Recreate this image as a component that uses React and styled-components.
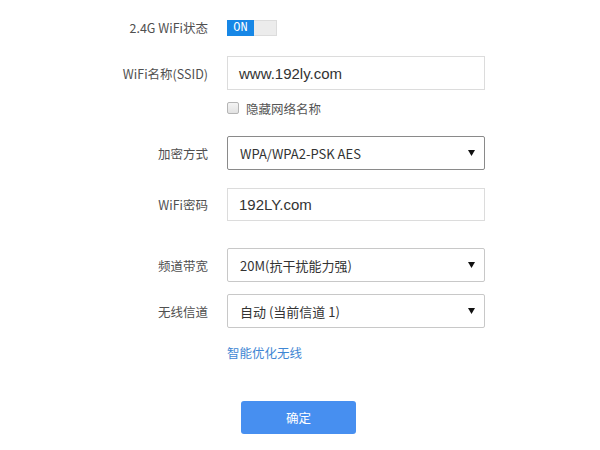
import React from "react";
import styled, { createGlobalStyle } from "styled-components";

const Global = createGlobalStyle`
  html, body { margin: 0; padding: 0; background: #fff; }
  body { font-family: "Noto Sans CJK SC", "Microsoft YaHei", "Liberation Sans", sans-serif; }
`;

const Page = styled.div`
  width: 600px;
  height: 450px;
  box-sizing: border-box;
  padding-top: 18px;
  display: flex;
  flex-direction: column;
`;

const Row = styled.div`
  display: grid;
  grid-template-columns: 208px 258px;
  column-gap: 19px;
  align-items: center;
  margin-top: ${(p) => p.$mt || 0}px;
  height: ${(p) => p.$h || 34}px;
`;

const Label = styled.div`
  text-align: right;
  font-size: 12.5px;
  color: #505050;
  white-space: nowrap;
`;

const Toggle = styled.div`
  display: flex;
  width: 50px;
  height: 16px;
  border: 1px solid #dcdcdc;
  box-sizing: border-box;
  background: #ececec;
`;

const ToggleOn = styled.div`
  width: 27px;
  margin: -1px 0 -1px -1px;
  background: #1787e6;
  color: #fff;
  font-family: "Liberation Mono", "DejaVu Sans Mono", monospace;
  font-weight: normal;
  font-size: 12px;
  line-height: 16px;
  text-align: center;
`;

const Input = styled.div`
  height: 100%;
  box-sizing: border-box;
  border: 1px solid #dcdcdc;
  padding-left: 11px;
  display: flex;
  align-items: center;
  font-family: "Liberation Sans", "Noto Sans CJK SC", sans-serif;
  font-size: 15px;
  color: #333;
`;

const Select = styled.div`
  height: 100%;
  box-sizing: border-box;
  border: 1px solid ${(p) => (p.$dark ? "#8a8a8a" : "#c8c8c8")};
  border-radius: 2px;
  padding: 0 9px 0 12px;
  display: flex;
  align-items: center;
  justify-content: space-between;
  font-size: 13px;
  color: #333;
`;

const CheckWrap = styled.label`
  display: flex;
  align-items: center;
  gap: 7px;
  font-size: 12.5px;
  color: #555;
`;

const Box = styled.span`
  width: 10px;
  height: 10px;
  border: 1px solid #b5b5b5;
  border-radius: 2px;
  background: linear-gradient(#f4f4f4, #e2e2e2);
`;

const Link = styled.a`
  font-size: 12.5px;
  color: #3f87d4;
  text-decoration: none;
`;

const Button = styled.button`
  width: 115px;
  height: 33px;
  margin-left: 14px;
  border: none;
  border-radius: 3px;
  background: #478ff0;
  color: #fff;
  font-family: "Noto Sans CJK SC", sans-serif;
  font-size: 12.5px;
  padding: 0;
`;

const Arrow = () => (
  <svg width="7" height="6" viewBox="0 0 7 6">
    <polygon points="0,0 7,0 3.5,6" fill="#111" />
  </svg>
);

export default function App() {
  return (
    <>
      <Global />
      <Page>
        <Row $h={16}>
          <Label>2.4G WiFi状态</Label>
          <Toggle>
            <ToggleOn>ON</ToggleOn>
          </Toggle>
        </Row>
        <Row $mt={22} $h={34}>
          <Label>WiFi名称(SSID)</Label>
          <Input>www.192ly.com</Input>
        </Row>
        <Row $mt={8} $h={20}>
          <div />
          <CheckWrap>
            <Box />
            隐藏网络名称
          </CheckWrap>
        </Row>
        <Row $mt={18} $h={34}>
          <Label>加密方式</Label>
          <Select $dark>
            <span>WPA/WPA2-PSK AES</span>
            <Arrow />
          </Select>
        </Row>
        <Row $mt={18} $h={33}>
          <Label>WiFi密码</Label>
          <Input>192LY.com</Input>
        </Row>
        <Row $mt={27} $h={34}>
          <Label>频道带宽</Label>
          <Select>
            <span>20M(抗干扰能力强)</span>
            <Arrow />
          </Select>
        </Row>
        <Row $mt={12} $h={34}>
          <Label>无线信道</Label>
          <Select>
            <span>自动 (当前信道 1)</span>
            <Arrow />
          </Select>
        </Row>
        <Row $mt={11} $h={20}>
          <div />
          <div>
            <Link href="#">智能优化无线</Link>
          </div>
        </Row>
        <Row $mt={42} $h={33}>
          <div />
          <div>
            <Button>确定</Button>
          </div>
        </Row>
      </Page>
    </>
  );
}
